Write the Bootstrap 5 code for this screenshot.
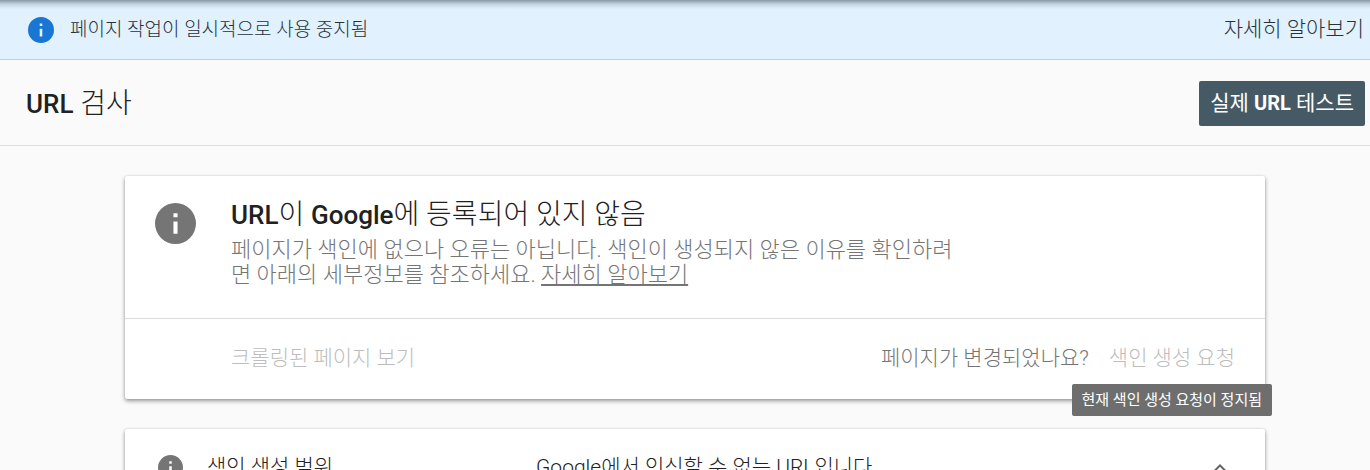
<!DOCTYPE html>
<html lang="ko">
<head>
<meta charset="utf-8">
<meta name="viewport" content="width=device-width, initial-scale=1">
<title>URL 검사</title>
<link rel="stylesheet" href="https://cdn.jsdelivr.net/npm/bootstrap@5.3.0/dist/css/bootstrap.min.css">
<style>
  body { background: #fafafa; color: #212121; font-family: Roboto, "Noto Sans CJK KR", sans-serif; font-size: 21px; line-height: 25px; font-weight: 300; scrollbar-width: none; }
  .notice { background: linear-gradient(#8797a4, #c3d2de 4px, #e1f1fd 9px); border-bottom: 1px solid #c3d0d9; height: 60px; padding: 0 6px 0 28px; color: #263238; }
  .notice-text { font-size: 19px; }
  .notice a { color: #263238; }
  .title-bar { height: 86px; padding: 2px 5px 0 26px; border-bottom: 1px solid #dcdcdc; }
  .page-title { font-size: 28px; line-height: 32px; }
  .title-latin { font-size: 26px; font-weight: 500; }
  .btn-live { background: #455a64; color: #fff; border: 0; border-radius: 2px; font-size: 21px; line-height: 25px; padding: 10px 11px; font-weight: 400; }
  .btn-live b { font-size: 20px; }
  .panels { padding: 30px 105px 0 125px; }
  .panel { background: #fff; border-radius: 2px; box-shadow: 0 2px 4px rgba(0,0,0,.4), 0 0 2px rgba(0,0,0,.12); margin-bottom: 30px; }
  .panel-main { padding: 23px 30px 31px; gap: 35px; }
  .summary { margin-top: 6px; font-size: 22px; color: #757575; }
  .summary a { color: #757575; }
  .panel-actions { border-top: 1px solid #dcdcdc; padding: 27px 30px 28px 106px; }
  .action-pair { gap: 20px; }
  .btn-flat { border: 0; background: none; padding: 0; color: #757575; font-size: 21px; line-height: 25px; font-weight: 300; }
  .btn-flat:disabled { color: #bdbdbd; }
  .tip { top: 100%; right: -37px; margin-top: 13px; background: #6e6e6e; color: #fff; border-radius: 2px; font-size: 15px; line-height: 20px; font-weight: 400; padding: 6px 10px; z-index: 2; }
  .coverage { padding: 26px 33px; }
  .coverage-name { width: 329px; }
</style>
</head>
<body>
<svg class="d-none"><symbol id="info" viewBox="2 2 20 20"><path fill="currentColor" d="M12 2a10 10 0 1 0 0 20 10 10 0 0 0 0-20zm1 15h-2v-6h2zm0-8h-2V7h2z"/></symbol></svg>
<div class="notice d-flex align-items-center justify-content-between" role="status">
  <div class="d-flex align-items-center">
    <svg width="26" height="26" style="color:#1976d2" aria-hidden="true"><use href="#info"/></svg>
    <span class="notice-text ms-3">페이지 작업이 일시적으로 사용 중지됨</span>
  </div>
  <a href="#" class="text-decoration-none">자세히 알아보기</a>
</div>
<header class="title-bar d-flex align-items-center justify-content-between">
  <h1 class="page-title fw-light mb-0"><span class="title-latin">URL</span> 검사</h1>
  <button type="button" class="btn-live">실제 <b>URL</b> 테스트</button>
</header>
<main class="panels">
  <section class="panel">
    <div class="panel-main d-flex">
      <svg class="flex-shrink-0 mt-1" width="41" height="41" style="color:#757575" aria-hidden="true"><use href="#info"/></svg>
      <div>
        <h2 class="page-title fw-light mb-0"><span class="title-latin">URL</span>이 <span class="title-latin">Google</span>에 등록되어 있지 않음</h2>
        <p class="summary mb-0">페이지가 색인에 없으나 오류는 아닙니다. 색인이 생성되지 않은 이유를 확인하려<br>면 아래의 세부정보를 참조하세요. <a href="#">자세히 알아보기</a></p>
      </div>
    </div>
    <div class="panel-actions d-flex justify-content-between">
      <button type="button" class="btn-flat" disabled>크롤링된 페이지 보기</button>
      <div class="action-pair d-flex">
        <span class="btn-flat">페이지가 변경되었나요?</span>
        <div class="position-relative">
          <button type="button" class="btn-flat" disabled aria-describedby="tip">색인 생성 요청</button>
          <div class="tip position-absolute text-nowrap" id="tip" role="tooltip">현재 색인 생성 요청이 정지됨</div>
        </div>
      </div>
    </div>
  </section>
  <section class="panel coverage d-flex align-items-center">
    <svg class="me-4" width="25" height="25" style="color:#757575" aria-hidden="true"><use href="#info"/></svg>
    <span class="coverage-name">색인 생성 범위</span>
    <span class="flex-grow-1">Google에서 인식할 수 없는 URL입니다</span>
    <svg width="24" height="24" viewBox="0 0 24 24" aria-hidden="true"><path fill="#616161" d="M12 8l-6 6 1.4 1.4L12 10.8l4.6 4.6L18 14z"/></svg>
  </section>
</main>
<script src="https://cdn.jsdelivr.net/npm/bootstrap@5.3.0/dist/js/bootstrap.bundle.min.js"></script>
</body>
</html>
